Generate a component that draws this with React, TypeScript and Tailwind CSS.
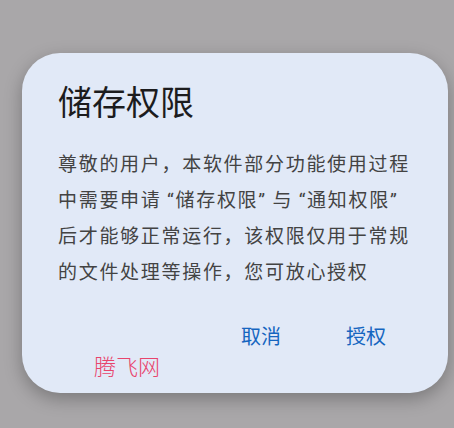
import React from "react";

const cjk = { fontFamily: 'Roboto, "Noto Sans CJK SC", sans-serif' };

export default function App() {
  return (
    <div className="min-h-[428px] w-full bg-[#a9a7a9] pt-[53px] pl-[22px]" style={cjk}>
      <div className="relative h-[340px] w-[426px] rounded-[38px] bg-[#e1e9f7] pl-[36px] pt-[28px] shadow-[0_6px_18px_rgba(0,0,0,0.28)]">
        <h1 className="text-[34px] leading-[44px] font-normal text-[#1c1c1e]">储存权限</h1>

        <p className="mt-[22px] text-[19px] leading-[36px] tracking-[1.7px] text-[#434343] whitespace-nowrap">
          尊敬的用户，本软件部分功能使用过程
          <br />
          中需要申请{"\u2009"}“储存权限”{"\u2009"}与{"\u2009"}“通知权限”
          <br />
          后才能够正常运行，该权限仅用于常规
          <br />
          的文件处理等操作，您可放心授权
        </p>

        <div className="mt-[32px] flex justify-end pr-[46px]">
          <button className="px-4 text-[20px] leading-[28px] text-[#1565c0]">取消</button>
          <button className="ml-[33px] px-4 text-[20px] leading-[28px] text-[#1565c0]">授权</button>
        </div>

        {/* site watermark */}
        <span className="pointer-events-none absolute left-[72px] top-[298px] text-[22px] leading-[33px] font-light text-[#e8446c]">
          腾飞网
        </span>
      </div>
    </div>
  );
}
